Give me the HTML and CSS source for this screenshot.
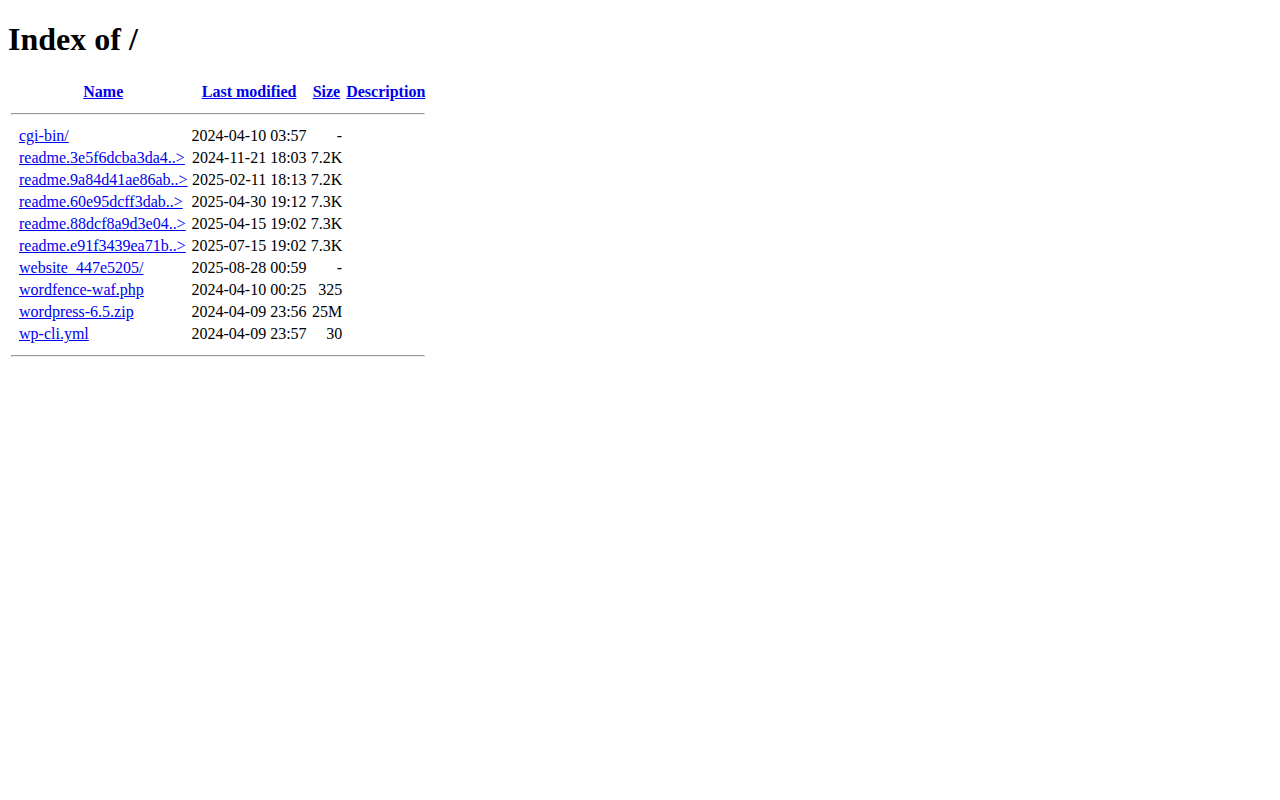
FILE: index.html
```html
<!DOCTYPE html>
<html>
<head>
<meta charset="utf-8">
<title>Index of /</title>
<link rel="stylesheet" href="styles.css">
</head>
<body class="page">
<h1 class="title">Index of /</h1>
<table class="listing">
<tr><th class="ico">&nbsp;</th><th><a href="?C=N;O=D">Name</a></th><th><a href="?C=M;O=A">Last modified</a></th><th><a href="?C=S;O=A">Size</a></th><th><a href="?C=D;O=A">Description</a></th></tr>
<tr><th colspan="5"><hr class="rule"></th></tr>
<tr><td class="ico">&nbsp;</td><td><a href="cgi-bin/">cgi-bin/</a></td><td class="r">2024-04-10 03:57  </td><td class="r">  - </td><td>&nbsp;</td></tr>
<tr><td class="ico">&nbsp;</td><td><a href="#">readme.3e5f6dcba3da4..&gt;</a></td><td class="r">2024-11-21 18:03  </td><td class="r">7.2K</td><td>&nbsp;</td></tr>
<tr><td class="ico">&nbsp;</td><td><a href="#">readme.9a84d41ae86ab..&gt;</a></td><td class="r">2025-02-11 18:13  </td><td class="r">7.2K</td><td>&nbsp;</td></tr>
<tr><td class="ico">&nbsp;</td><td><a href="#">readme.60e95dcff3dab..&gt;</a></td><td class="r">2025-04-30 19:12  </td><td class="r">7.3K</td><td>&nbsp;</td></tr>
<tr><td class="ico">&nbsp;</td><td><a href="#">readme.88dcf8a9d3e04..&gt;</a></td><td class="r">2025-04-15 19:02  </td><td class="r">7.3K</td><td>&nbsp;</td></tr>
<tr><td class="ico">&nbsp;</td><td><a href="#">readme.e91f3439ea71b..&gt;</a></td><td class="r">2025-07-15 19:02  </td><td class="r">7.3K</td><td>&nbsp;</td></tr>
<tr><td class="ico">&nbsp;</td><td><a href="website_447e5205/">website_447e5205/</a></td><td class="r">2025-08-28 00:59  </td><td class="r">  - </td><td>&nbsp;</td></tr>
<tr><td class="ico">&nbsp;</td><td><a href="wordfence-waf.php">wordfence-waf.php</a></td><td class="r">2024-04-10 00:25  </td><td class="r">325 </td><td>&nbsp;</td></tr>
<tr><td class="ico">&nbsp;</td><td><a href="wordpress-6.5.zip">wordpress-6.5.zip</a></td><td class="r">2024-04-09 23:56  </td><td class="r"> 25M</td><td>&nbsp;</td></tr>
<tr><td class="ico">&nbsp;</td><td><a href="wp-cli.yml">wp-cli.yml</a></td><td class="r">2024-04-09 23:57  </td><td class="r"> 30 </td><td>&nbsp;</td></tr>
<tr><th colspan="5"><hr class="rule"></th></tr>
</table>
</body>
</html>
```

FILE: styles.css
```css
.page {
  font-family: "Liberation Serif", "Times New Roman", serif;
  font-size: 16px;
  color: #000;
  background: #fff;
}
.title {
  font-size: 2em;
  font-weight: bold;
  margin-top: 13.44px;
}
.listing td.r {
  text-align: right;
}
.listing th.ico,
.listing td.ico {
  vertical-align: top;
}
.listing a:link,
.listing a:visited {
  color: #0000ee;
}
```
